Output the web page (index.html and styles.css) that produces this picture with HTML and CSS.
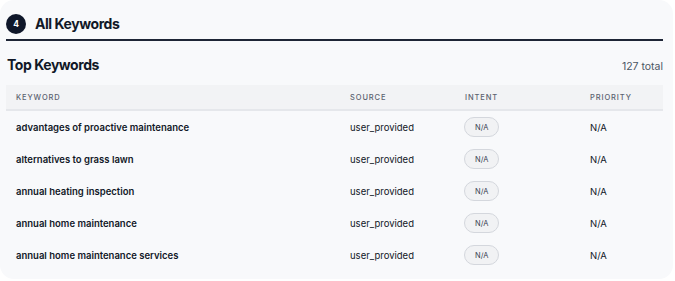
FILE: index.html
```html
<!DOCTYPE html>
<html lang="en">
<head>
<meta charset="utf-8">
<title>All Keywords</title>
<link rel="stylesheet" href="styles.css">
</head>
<body>
<div class="card">
  <div class="section-head">
    <span class="step">4</span>
    <h2 class="section-title">All Keywords</h2>
  </div>
  <div class="sub-head">
    <h3 class="sub-title">Top Keywords</h3>
    <span class="count">127 total</span>
  </div>
  <table class="kw-table">
    <colgroup>
      <col class="c-kw"><col class="c-src"><col class="c-int"><col class="c-pri">
    </colgroup>
    <thead>
      <tr><th>Keyword</th><th>Source</th><th>Intent</th><th>Priority</th></tr>
    </thead>
    <tbody>
      <tr><td class="kw">advantages of proactive maintenance</td><td>user_provided</td><td><span class="pill">N/A</span></td><td>N/A</td></tr>
      <tr><td class="kw">alternatives to grass lawn</td><td>user_provided</td><td><span class="pill">N/A</span></td><td>N/A</td></tr>
      <tr><td class="kw">annual heating inspection</td><td>user_provided</td><td><span class="pill">N/A</span></td><td>N/A</td></tr>
      <tr><td class="kw">annual home maintenance</td><td>user_provided</td><td><span class="pill">N/A</span></td><td>N/A</td></tr>
      <tr><td class="kw">annual home maintenance services</td><td>user_provided</td><td><span class="pill">N/A</span></td><td>N/A</td></tr>
    </tbody>
  </table>
</div>
</body>
</html>
```
FILE: styles.css
```css
html, body {
  margin: 0;
  padding: 0;
  background: #ffffff;
}
body {
  font-family: Inter, "Noto Sans", sans-serif;
  color: #111827;
}
.card {
  width: 657px;
  height: 265px;
  padding: 14px 10px 0 6px;
  background: #f8f9fb;
  border-radius: 14px;
}
.section-head {
  display: flex;
  align-items: center;
  gap: 9px;
  padding-bottom: 5px;
  border-bottom: 2px solid #1e2536;
}
.step {
  width: 20px;
  height: 20px;
  border-radius: 50%;
  background: #0f172a;
  color: #fff;
  font-size: 8.5px;
  font-weight: 700;
  display: flex;
  align-items: center;
  justify-content: center;
}
.section-title {
  margin: 0;
  font-size: 14px;
  font-weight: 700;
  line-height: 20px;
  letter-spacing: -0.45px;
}
.sub-head {
  display: flex;
  justify-content: space-between;
  align-items: center;
  margin-top: 14px;
  height: 20px;
  padding-left: 1px;
}
.sub-title {
  margin: 0;
  font-size: 14px;
  font-weight: 700;
  line-height: 20px;
  letter-spacing: -0.45px;
}
.count {
  font-size: 10.5px;
  color: #4b5563;
  margin-top: 3px;
}
.kw-table {
  width: 100%;
  margin-top: 10px;
  border-collapse: collapse;
  table-layout: fixed;
}
.c-kw { width: 334px; }
.c-src { width: 115px; }
.c-int { width: 125px; }
.c-pri { width: 83px; }
.kw-table th {
  height: 24px;
  padding: 0 10px;
  background: #f2f3f5;
  border-bottom: 2px solid #e5e7eb;
  text-align: left;
  font-size: 7.5px;
  font-weight: 500;
  letter-spacing: 0.9px;
  text-transform: uppercase;
  color: #5b6270;
}
.kw-table td {
  height: 32px;
  padding: 0 10px;
  font-size: 9.5px;
  color: #111827;
  vertical-align: middle;
}
.kw-table td.kw {
  font-weight: 600;
}
.pill {
  display: inline-flex;
  align-items: center;
  height: 18px;
  padding: 0 10px;
  border: 1px solid #d4d7dd;
  border-radius: 10px;
  background: #f1f2f4;
  font-size: 7.5px;
  color: #374151;
  margin-left: -1px;
}
```
